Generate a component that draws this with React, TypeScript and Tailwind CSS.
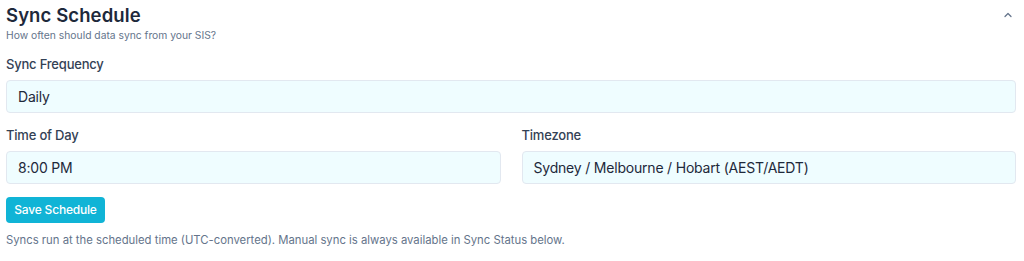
import { ChevronUp } from "lucide-react";

export default function App() {
  return (
    <div
      className="w-[1024px] h-[261px] bg-white px-[6px] pt-[3px]"
      style={{ fontFamily: "Inter, 'Open Sans', sans-serif" }}
    >
      <div className="flex items-start justify-between pr-[2px]">
        <div>
          <h2 className="text-[18.5px] leading-[24px] font-semibold text-[#1e293b] tracking-[0.1px]">Sync Schedule</h2>
          <p className="text-[10.3px] leading-[14px] mt-[1px] text-[#64748b]">
            How often should data sync from your SIS?
          </p>
        </div>
        <button className="mt-[4px] w-[16px] h-[16px] flex items-center justify-center rounded text-[#64748b]">
          <ChevronUp size={12} strokeWidth={2.5} />
        </button>
      </div>

      <div className="mt-[14px]">
        <label className="block text-[13px] leading-[16px] font-medium text-[#334155] tracking-[-0.2px]">
          Sync Frequency
        </label>
        <div className="mt-[8px] w-[1010px] h-[33px] flex items-center px-[11px] rounded-[4px] border border-[#e2e8f0] bg-[#effdff] text-[14px] text-[#1e293b] tracking-[-0.2px]">
          Daily
        </div>
      </div>

      <div className="mt-[14px] grid grid-cols-2 gap-[21px] w-[1010px]">
        <div>
          <label className="block text-[13px] leading-[16px] font-medium text-[#334155] tracking-[-0.2px]">
            Time of Day
          </label>
          <div className="mt-[8px] h-[33px] flex items-center px-[11px] rounded-[4px] border border-[#e2e8f0] bg-[#effdff] text-[14px] text-[#1e293b] tracking-[-0.2px]">
            8:00 PM
          </div>
        </div>
        <div>
          <label className="block text-[13px] leading-[16px] font-medium text-[#334155] tracking-[-0.2px]">
            Timezone
          </label>
          <div className="mt-[8px] h-[33px] flex items-center px-[11px] rounded-[4px] border border-[#e2e8f0] bg-[#effdff] text-[14px] text-[#1e293b] tracking-[-0.2px]">
            Sydney / Melbourne / Hobart (AEST/AEDT)
          </div>
        </div>
      </div>

      <button className="mt-[13px] w-[99px] h-[26px] rounded-[4px] bg-[#10b4d6] text-white text-[12px] font-medium tracking-[-0.2px]">
        Save Schedule
      </button>

      <p className="mt-[10px] text-[11.3px] leading-[14px] text-[#64748b]">
        Syncs run at the scheduled time (UTC-converted). Manual sync is always available in Sync Status below.
      </p>
    </div>
  );
}
